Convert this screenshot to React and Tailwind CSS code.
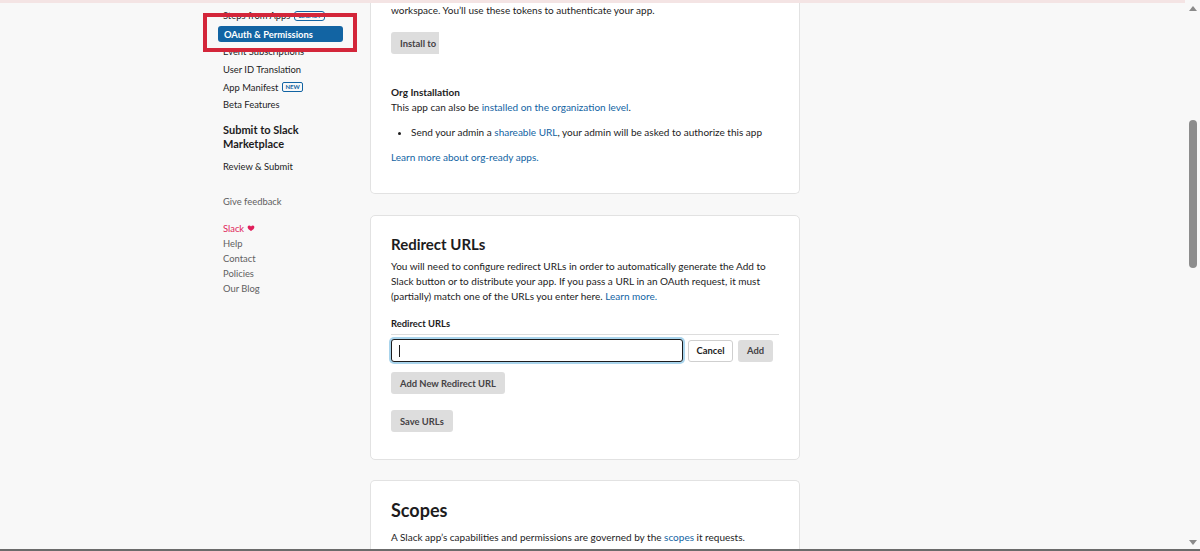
import React from 'react';

const navItems = [
  { label: 'Event Subscriptions' },
  { label: 'User ID Translation' },
  { label: 'App Manifest', badge: 'NEW' },
  { label: 'Beta Features' },
];

const footerLinks = ['Help', 'Contact', 'Policies', 'Our Blog'];

const Sidebar = () => (
  <aside className="relative w-[152px] shrink-0 pt-[4px] text-[9.4px] leading-[15px] text-[#1d1c1d]">
    {/* Steps from Apps (partly hidden under the annotation) */}
    <div className="flex items-center gap-[4px] pl-[5px] h-[17px]">
      <span>Steps from Apps</span>
      <span className="border border-[#1264a3] rounded-[3px] px-[3px] text-[6px] leading-[8px] text-[#1264a3] font-bold">LEGACY</span>
    </div>
    <div className="mt-[2px] h-[16px] w-[125px] rounded-[3px] bg-[#1264a3] pl-[6px] flex items-center text-white font-bold">
      OAuth &amp; Permissions
    </div>
    <div className="mt-[1px]">
      {navItems.map((item) => (
        <div key={item.label} className="flex items-center gap-[4px] pl-[5px] h-[17.7px]">
          <span>{item.label}</span>
          {item.badge && (
            <span className="border border-[#1264a3] rounded-[2px] px-[2px] text-[6px] leading-[8px] text-[#1264a3] font-bold">
              {item.badge}
            </span>
          )}
        </div>
      ))}
    </div>

    <div className="pl-[5px] mt-[9px] text-[11px] leading-[14px] font-bold">
      Submit to Slack
      <br />
      Marketplace
    </div>
    <div className="pl-[5px] mt-[8px]">Review &amp; Submit</div>

    <div className="pl-[5px] mt-[20px] text-[#616061]">Give feedback</div>

    <div className="pl-[5px] mt-[12px] text-[#616061]">
      <div className="flex items-center gap-[3px] text-[#e01e5a]">
        Slack
        <svg viewBox="0 0 24 24" className="w-[8px] h-[8px]" fill="#e01e5a">
          <path d="M12 21s-7.5-4.6-9.6-9.2C.9 8.4 3 4.5 6.6 4.5c2.2 0 3.9 1.2 5.4 3.1 1.5-1.9 3.2-3.1 5.4-3.1 3.6 0 5.7 3.9 4.2 7.3C19.5 16.4 12 21 12 21z" />
        </svg>
      </div>
      {footerLinks.map((l) => (
        <div key={l}>{l}</div>
      ))}
    </div>

    {/* red annotation box */}
    <div className="absolute left-[-15px] top-[10px] w-[154px] h-[39px] border-[4px] border-[#d3263a]" />
  </aside>
);

const GrayButton = ({ children, className = '' }) => (
  <button className={`h-[22px] rounded-[3px] bg-[#dddddd] px-[9px] text-[9.4px] font-bold text-[#454245] ${className}`}>
    {children}
  </button>
);

const Main = () => (
  <main className="w-[430px] shrink-0 text-[10px] leading-[15px] text-[#1d1c1d]">
    {/* Card 1 (top scrolled off) */}
    <section className="bg-white border border-t-0 border-[#e2e2e2] rounded-b-[5px] px-[20px] pb-[28px]">
      <p>workspace. You’ll use these tokens to authenticate your app.</p>
      <button className="mt-[14px] h-[22px] flex items-stretch rounded-[3px] bg-[#dddddd] pl-[9px] text-[9.4px] font-bold text-[#454245]">
        <span className="flex items-center pr-[3px]">Install to</span>
        <span className="w-[77px] bg-white" />
      </button>
      <p className="mt-[31px] font-bold">Org Installation</p>
      <p>
        This app can also be <span className="text-[#1264a3]">installed on the organization level</span>.
      </p>
      <ul className="mt-[10px] list-disc pl-[20px]">
        <li>
          Send your admin a <span className="text-[#1264a3]">shareable URL</span>, your admin will be asked to authorize this app
        </li>
      </ul>
      <p className="mt-[10px] text-[#1264a3]">Learn more about org-ready apps.</p>
    </section>

    {/* Redirect URLs */}
    <section className="mt-[21px] bg-white border border-[#e2e2e2] rounded-[5px] px-[20px] pt-[18px] pb-[27px]">
      <h2 className="text-[15px] leading-[20px] font-bold">Redirect URLs</h2>
      <p className="mt-[5px]">
        You will need to configure redirect URLs in order to automatically generate the Add to Slack button or to
        distribute your app. If you pass a URL in an OAuth request, it must (partially) match one of the URLs you enter
        here. <span className="text-[#1264a3]">Learn more.</span>
      </p>
      <div className="mt-[12px] pb-[3px] border-b border-[#dddddd] font-bold text-[9.4px]">Redirect URLs</div>
      <div className="mt-[4px] flex items-center gap-[5px]">
        <div className="w-[292px] h-[23px] rounded-[3px] border border-[#1d1c1d] ring-[2px] ring-[#a9d4ec] bg-white flex items-center pl-[7px]">
          <span className="w-px h-[12px] bg-[#1d1c1d]" />
        </div>
        <button className="h-[22px] w-[45px] rounded-[3px] border border-[#cfcfcf] bg-white text-[9.4px] font-bold text-[#1d1c1d]">
          Cancel
        </button>
        <button className="h-[22px] w-[35px] rounded-[3px] bg-[#dddddd] text-[9.4px] font-bold text-[#454245]">Add</button>
      </div>
      <div className="mt-[10px]">
        <GrayButton>Add New Redirect URL</GrayButton>
      </div>
      <div className="mt-[16px]">
        <GrayButton>Save URLs</GrayButton>
      </div>
    </section>

    {/* Scopes */}
    <section className="mt-[20px] bg-white border border-b-0 border-[#e2e2e2] rounded-t-[5px] px-[20px] pt-[17px] h-[80px]">
      <h2 className="text-[18px] leading-[24px] font-bold">Scopes</h2>
      <p className="mt-[8px]">
        A Slack app’s capabilities and permissions are governed by the <span className="text-[#1264a3]">scopes</span> it
        requests.
      </p>
    </section>
  </main>
);

const Scrollbar = () => (
  <div className="w-[15px] shrink-0 bg-[#f8f8f8] flex flex-col items-center">
    <svg viewBox="0 0 8 5" className="mt-[6px] w-[8px] h-[5px]" fill="#8a8a8a">
      <path d="M4 0 8 5H0z" />
    </svg>
    <div className="mt-[109px] w-[8px] h-[148px] rounded-full bg-[#8d8d8d]" />
    <div className="flex-1" />
    <svg viewBox="0 0 8 5" className="mb-[4px] w-[8px] h-[5px]" fill="#8a8a8a">
      <path d="M0 0h8L4 5z" />
    </svg>
  </div>
);

export default function App() {
  return (
    <div className="w-[1200px] h-[551px] overflow-hidden flex flex-col bg-[#f8f8f8] font-[Lato,'Liberation_Sans',sans-serif]">
      <div className="flex-1 flex min-h-0">
        <div className="flex-1 min-w-0 flex flex-col overflow-hidden">
          <div className="h-[3px] shrink-0 bg-[#f4e4e4]" />
          <div className="flex pl-[218px]">
            <Sidebar />
            <Main />
          </div>
        </div>
        <Scrollbar />
      </div>
      <div className="h-[2px] shrink-0 bg-[#6b6b6b]" />
    </div>
  );
}
